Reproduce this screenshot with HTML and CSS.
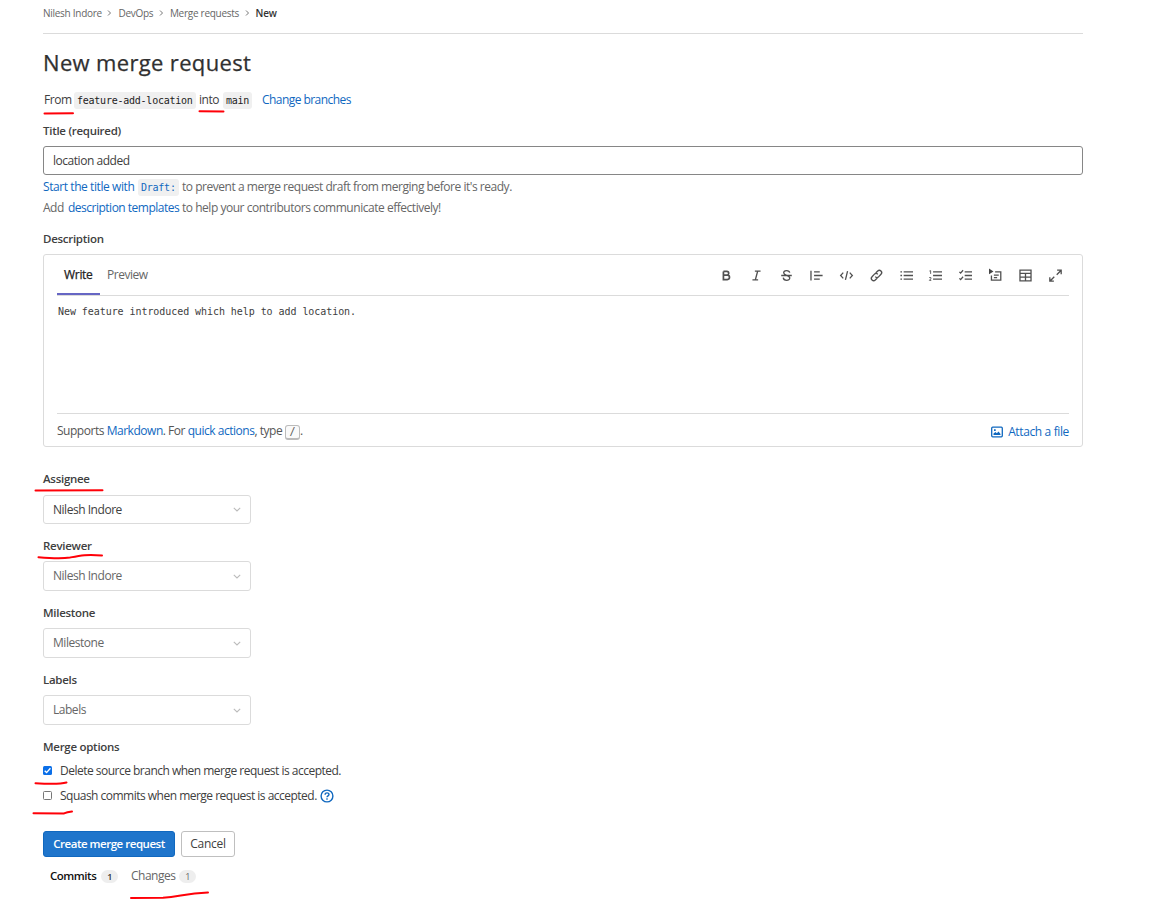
FILE: index.html
```html
<!DOCTYPE html>
<html lang="en">
<head>
<meta charset="utf-8">
<title>New merge request</title>
<link rel="stylesheet" href="styles.css">
</head>
<body>
<main class="page">
  <nav class="breadcrumbs">
    <a class="c1">Nilesh Indore</a><svg class="sep" viewBox="0 0 5 8"><path d="M1 1.5 3.5 4 1 6.5"/></svg>
    <a class="c2">DevOps</a><svg class="sep" viewBox="0 0 5 8"><path d="M1 1.5 3.5 4 1 6.5"/></svg>
    <a class="c3">Merge requests</a><svg class="sep" viewBox="0 0 5 8"><path d="M1 1.5 3.5 4 1 6.5"/></svg>
    <b>New</b>
  </nav>
  <h1>New merge request</h1>
  <div class="branches"><span class="from">From</span><code class="source">feature-add-location</code><span class="into">into</span><code class="target">main</code><a class="link">Change branches</a></div>

  <label class="label title-label">Title (required)</label>
  <div class="title-input"><span>location added</span></div>
  <p class="help"><a class="link start">Start the title with</a><code class="draft">Draft:</code><span class="prevent">to prevent a merge request draft from merging before it's ready.</span></p>
  <p class="help second"><span class="add">Add</span><a class="link templates">description templates</a><span class="contrib">to help your contributors communicate effectively!</span></p>

  <label class="label desc-label">Description</label>
  <section class="editor">
    <header class="editor-head">
      <span class="tab active">Write</span><span class="tab">Preview</span>
      <div class="tools">
        <svg viewBox="0 0 16 16"><path class="bold" d="M4.2 3v10H9a2.7 2.7 0 0 0 0-5.4H4.2M4.2 3h4.2a2.3 2.3 0 0 1 0 4.6"/></svg>
        <svg viewBox="0 0 16 16"><path d="M6 2.5h7M3 13.500h7M9.500 2.500l-3 11"/></svg>
        <svg viewBox="0 0 16 16"><path d="M1.500 8h13M12 4.500C11.300 1 4.500 1 4.500 4.700 4.500 8 12 7.500 12 11c0 4-7.500 4-8-.3"/></svg>
        <svg viewBox="0 0 16 16"><path d="M1.200 2v12M5 3.500h7M5 8h10.500M5 12.500h7"/></svg>
        <svg viewBox="0 0 16 16"><path d="M4 4.500.8 8 4 11.500M12 4.500 15.200 8 12 11.500M9.300 2.500l-2.600 11"/></svg>
        <svg viewBox="0 0 16 16"><path d="M6.500 9.500a2.600 2.600 0 0 0 4 .2l3-3.200a2.800 2.800 0 0 0-4-4L7 5M9.500 6.500a2.600 2.600 0 0 0-4-.2l-3 3.200a2.800 2.800 0 0 0 4 4L9 11"/></svg>
        <svg viewBox="0 0 16 16"><path d="M4.500 3.500H16M4.500 8H16M4.500 12.500H16M.5 3.500h2M.5 8h2M.5 12.500h2"/></svg>
        <svg viewBox="0 0 16 16"><path d="M5 3.500h11M5 8h11M5 12.500h11"/><path class="thin" d="M.5 2.500 2 2v4M.3 10.500h2V12L.5 14h2.300"/></svg>
        <svg viewBox="0 0 16 16"><path d="M7 3.500h9M7 8h9M7 12.500h9M.5 3.500 2 5l3-3.500M.5 11.500 2 13l3-3.500"/></svg>
        <svg viewBox="0 0 16 16"><path d="M7.500 3.500h7v10.300H3V8M6 7.500h6M6 10.500h4"/><path class="solid" d="M0-.5v7L5.500 3z"/></svg>
        <svg viewBox="0 0 16 16"><path d="M1.200 1.500h13.600v13H1.200zM1.200 5.500h13.600M1.200 10h13.600M8 5.500v9"/></svg>
        <svg viewBox="0 0 16 16"><path d="M10 1.500h5v5M15 1.500 9.500 7M6 15H1v-5M1 15l5.500-5.500"/></svg>
      </div>
    </header>
    <div class="textarea">New feature introduced which help to add location.</div>
    <footer class="editor-foot">
      <div class="supports">Supports <a class="link">Markdown</a>. For <a class="link">quick actions</a>, type <kbd>/</kbd>.</div>
      <a class="link attach"><svg viewBox="0 0 12 12"><rect x=".7" y="1.200" width="10.600" height="9.600" rx="1"/><path class="fill" d="M2.500 9V7.500L4.500 6l1.300 1.200L7.500 5.500 9.500 8v1zM3 3.200h1.700v1.700H3z"/></svg><span>Attach a file</span></a>
    </footer>
  </section>

  <div class="field first"><label class="label">Assignee</label><div class="select dark"><span>Nilesh Indore</span><svg viewBox="0 0 8 5"><path d="m.8.800 3.200 3.200L7.200.8"/></svg></div></div>
  <div class="field"><label class="label">Reviewer</label><div class="select"><span>Nilesh Indore</span><svg viewBox="0 0 8 5"><path d="m.8.800 3.200 3.200L7.200.8"/></svg></div></div>
  <div class="field"><label class="label">Milestone</label><div class="select"><span>Milestone</span><svg viewBox="0 0 8 5"><path d="m.8.800 3.200 3.200L7.200.8"/></svg></div></div>
  <div class="field"><label class="label">Labels</label><div class="select"><span>Labels</span><svg viewBox="0 0 8 5"><path d="m.8.800 3.200 3.200L7.200.8"/></svg></div></div>

  <div class="label options-label">Merge options</div>
  <div class="option"><i class="box checked"><svg viewBox="0 0 9 9"><path d="M1.700 4.700 3.600 6.600 7.400 2.300"/></svg></i><span>Delete source branch when merge request is accepted.</span></div>
  <div class="option"><i class="box"></i><span class="squash">Squash commits when merge request is accepted.</span><svg class="question" viewBox="0 0 14 14"><circle cx="7" cy="7" r="5.900"/><path d="M5.100 5.700c0-2.500 3.900-2.300 3.900-.2C9 6.800 7 6.900 7 8.300M7 9.300v1.400"/></svg></div>

  <div class="actions"><button class="primary"><span>Create merge request</span></button><button><span>Cancel</span></button></div>
  <div class="tabs"><span class="commits">Commits</span><em>1</em><span class="changes">Changes</span><em class="muted">1</em></div>
</main>
<svg class="marks" viewBox="0 0 1152 899">
  <path d="M44.500 113.500 73 113.300M199.500 111.200l24 .2M35.500 490.500l67-.2M38.500 557.200C50 558.200 62 558.800 70 557.500 80 555.500 87 554 102 555.500M35.500 783.200C48 784 60 784.300 66.500 782.500M33.500 813.200 64 813.400Q67 812 72 811.500M131 898l32-.3C180 896.500 185 893.500 208 892.500"/>
</svg>
</body>
</html>
```
FILE: styles.css
```css
* { box-sizing: border-box; }
body { margin: 0; height: 899px; overflow: hidden; position: relative; background: #fff; color: #404040; font: 12px/20px "Open Sans", "Noto Sans", sans-serif; letter-spacing: -0.47px; white-space: nowrap; }
.page { width: 1040px; margin-left: 43px; }
.link { color: #1068bf; }
code, .textarea, kbd { font-family: "DejaVu Sans Mono", monospace; font-size: 10px; letter-spacing: -0.24px; }

.breadcrumbs { display: flex; align-items: center; height: 34px; padding-bottom: 7px; border-bottom: 1px solid #dbdbdb; font-size: 10px; letter-spacing: -0.27px; color: #666; }
.breadcrumbs b { color: #333; font-weight: 600; }
.sep { width: 5px; height: 8px; margin: 0 6px 0 5.5px; fill: none; stroke: #777; stroke-width: 1; }
h1 { margin: 13px 0 0; height: 31px; line-height: 30px; font-size: 22px; font-weight: 500; letter-spacing: 0.34px; color: #303030; -webkit-text-stroke: 0.25px #303030; }
.branches { display: flex; align-items: center; height: 20px; margin-top: 12px; }
.branches > *, .help > * { flex: none; }
.branches .link { letter-spacing: -0.55px; }
code { height: 17px; line-height: 17px; padding: 0 3px; border-radius: 3px; background: #f0f0f0; color: #222; }
.from { width: 31px; padding-left: 1px; }
.source { width: 122px; }
.into { width: 24px; margin-left: 3px; }
.target { width: 29px; margin-right: 10px; }

.label { display: block; height: 20px; font-weight: 600; font-size: 11.5px; letter-spacing: -0.28px; color: #404040; }
.title-label { margin-top: 11px; }
.title-input { display: flex; align-items: center; height: 29px; margin-top: 5px; padding-left: 9px; border: 1px solid #868686; border-radius: 3px; }
.help { display: flex; align-items: center; height: 20px; margin: 2px 0 0; color: #666; }
.help.second { margin-top: 1px; }
.start { width: 95px; letter-spacing: -0.42px; }
.draft { width: 41px; color: #1068bf; margin-right: 3px; }
.add { width: 25px; }
.templates { width: 114px; letter-spacing: -0.5px; }
.desc-label { margin-top: 11px; }

.editor { display: flex; flex-direction: column; height: 193px; margin-top: 5px; padding: 0 13px; border: 1px solid #dbdbdb; border-radius: 3px; }
.editor-head { display: flex; height: 41px; border-bottom: 1px solid #dbdbdb; }
.tab { height: 40px; padding: 0 7px; line-height: 40px; color: #666; }
.tab.active { color: #222; width: 43px; letter-spacing: -0.3px; -webkit-text-stroke: 0.25px #222; border-bottom: 2px solid #6666c4; }
.tools { display: flex; align-items: center; gap: 17px; margin: 0 7px 0 auto; }
.tools svg { width: 13px; height: 13px; margin: 0 -.06px; fill: none; stroke: #505050; stroke-width: 1.6; overflow: visible; }
.tools .bold { stroke-width: 2.1; }
.tools .thin { stroke-width: 1.1; }
.tools .solid { fill: #454545; stroke: none; }
.textarea { flex: 1; padding: 6px 1px; letter-spacing: -0.06px; color: #404040; }
.editor-foot { display: flex; justify-content: space-between; height: 33px; border-top: 1px solid #dbdbdb; color: #555; line-height: 34px; }
kbd { display: inline-block; width: 15px; height: 15px; line-height: 12px; text-align: center; border: 1px solid #bbb; border-bottom-width: 2px; border-radius: 3px; background: #fafafa; color: #555; vertical-align: 0; }
.attach { display: flex; align-items: center; gap: 5px; padding-top: 3px; letter-spacing: -0.37px; }
.attach svg { width: 12px; height: 12px; fill: none; stroke: #1068bf; stroke-width: 1.3; }
.attach .fill { fill: #1068bf; stroke: none; }

.field { margin-top: 12px; height: 55px; }
.field.first { margin-top: 22px; }
.select { display: flex; align-items: center; justify-content: space-between; width: 208px; height: 30px; margin-top: 5px; padding: 0 9px; border: 1px solid #dbdbdb; border-radius: 3px; color: #666; }
.select.dark { color: #404040; height: 29px; margin-top: 6px; }
.select svg { width: 8px; height: 5px; fill: none; stroke: #bbb; stroke-width: 1.1; }

.options-label { margin-top: 12px; }
.option { display: flex; align-items: center; height: 20px; margin-top: 4px; letter-spacing: -0.51px; }
.option + .option { margin-top: 5px; }
.box { width: 9px; height: 9px; margin: -1px 8px 0 0; border: 1px solid #777; border-radius: 1.5px; }
.box.checked { border: 0; background: #0b6fe8; }
.box svg { display: block; width: 9px; height: 9px; fill: none; stroke: #fff; stroke-width: 1.4; }
.question { width: 14px; height: 14px; margin-left: 3.5px; fill: none; stroke: #1068bf; stroke-width: 1.4; }
.actions { display: flex; gap: 6px; margin-top: 25px; }
button { width: 54px; height: 26px; padding: 0; border: 1px solid #bfbfbf; border-radius: 3px; background: #fff; color: #404040; font: inherit; letter-spacing: -0.3px; }
.primary { width: 132px; border-color: #1068bf; background: #1f75cb; color: #fff; font-weight: 600; font-size: 11.5px; letter-spacing: -0.48px; }
.tabs { display: flex; align-items: center; height: 20px; margin: 9px 0 0 7px; }
.commits { width: 51px; color: #111; font-weight: 600; font-size: 11.5px; }
.changes { width: 48px; color: #666; letter-spacing: -0.5px; }
em { width: 17px; height: 13px; margin-right: 13px; border-radius: 7px; background: #eee; color: #333; font: 600 9px/13px "Open Sans", sans-serif; text-align: center; }
em.muted { color: #666; font-weight: 400; }
.marks { position: absolute; left: 0; top: 0; width: 1152px; height: 899px; fill: none; stroke: #ff0008; stroke-width: 2; stroke-linecap: round; pointer-events: none; }
```
